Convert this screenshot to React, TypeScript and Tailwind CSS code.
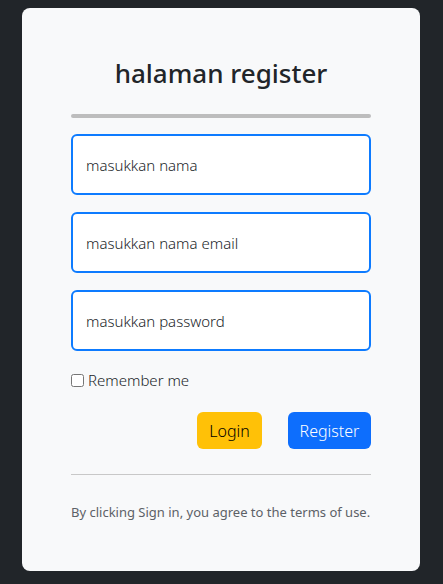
const inputs = ['masukkan nama', 'masukkan nama email', 'masukkan password']

export default function App() {
  return (
    <div className="min-h-[584px] bg-[#212529] pt-2 font-['Noto_Sans',sans-serif] font-light">
      <div className="mx-[22px] w-[398px] rounded-lg bg-[#f8f9fa] px-[49px] pb-[49px] pt-[50px]">
        <h1 className="text-center text-[26px] font-medium leading-[31px] text-[#212529]">
          halaman register
        </h1>
        <div className="mt-[25px] h-1 rounded-full bg-[#bdbdbd]" />

        <form className="mt-4 flex flex-col gap-[17px]">
          {inputs.map((placeholder) => (
            <input
              className="h-[61px] w-full rounded-md border-2 border-[#0d7bff] bg-white px-[13px] text-[15px] font-light text-[#212529] outline-none placeholder:text-[#212529]"
              key={placeholder}
              placeholder={placeholder}
              type={placeholder.includes('password') ? 'password' : 'text'}
            />
          ))}
        </form>

        <label className="mt-[17px] flex items-center gap-[4px] text-[15px] leading-6 text-[#212529]">
          <input className="m-0 h-[13px] w-[13px]" type="checkbox" />
          Remember me
        </label>

        <div className="mt-5 flex justify-end gap-[26px]">
          <button className="h-[37px] w-[65px] rounded-md bg-[#ffc107] text-base font-light text-black">
            Login
          </button>
          <button className="h-[37px] w-[83px] rounded-md bg-[#0d6efd] text-base font-light text-white">
            Register
          </button>
        </div>

        <hr className="mt-[25px] border-t border-[#c8c8c8]" />

        <p className="mt-[27px] text-[13px] font-normal leading-5 text-[#5c6167]">
          By clicking Sign in, you agree to the terms of use.
        </p>
      </div>
    </div>
  )
}
